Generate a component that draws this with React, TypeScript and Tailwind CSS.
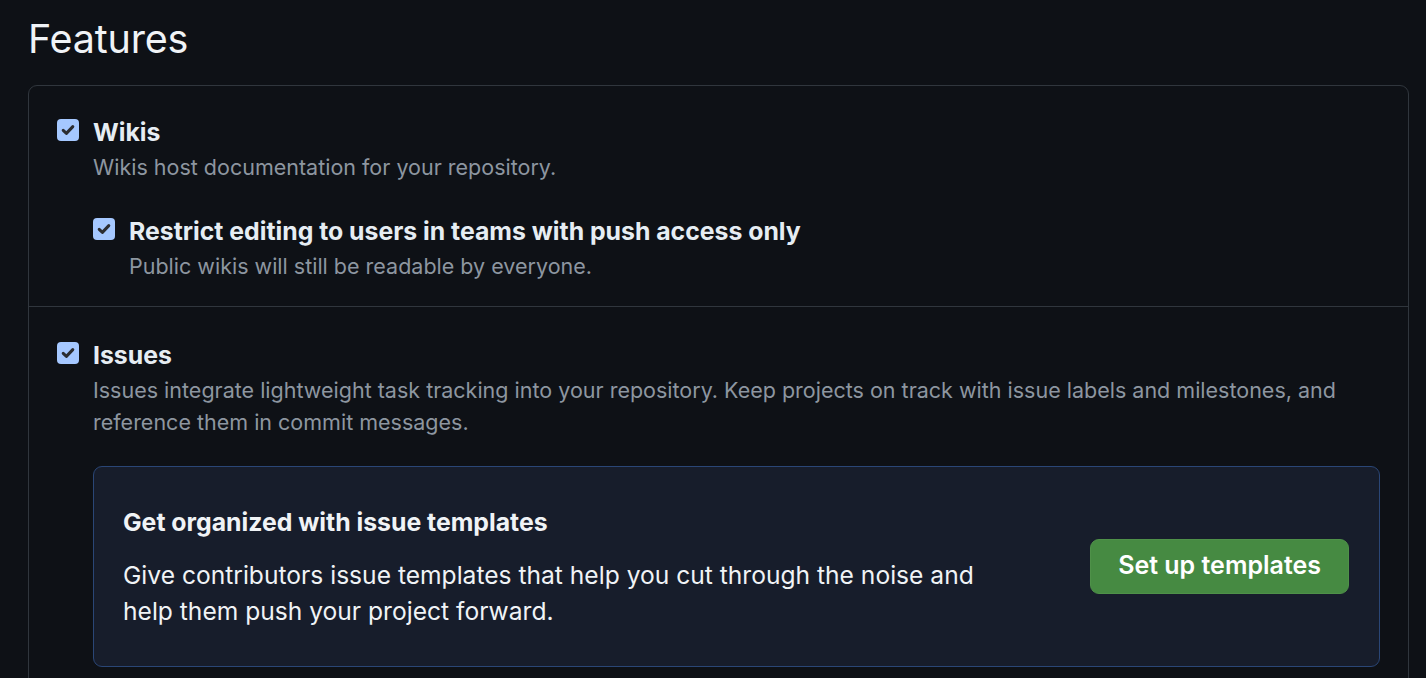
import React from "react";

function Check({ className = "" }: { className?: string }) {
  return (
    <span
      className={
        "flex h-[22px] w-[22px] shrink-0 items-center justify-center rounded-[4px] bg-[#a5c8ff] " +
        className
      }
    >
      <svg width="16" height="16" viewBox="0 0 16 16" fill="none">
        <path
          d="M3.2 8.4 L6.4 11.4 L12.8 4.6"
          stroke="#2b2d31"
          strokeWidth="3"
          strokeLinecap="round"
          strokeLinejoin="round"
        />
      </svg>
    </span>
  );
}

export default function App() {
  return (
    <div
      className="min-h-[678px] w-full overflow-hidden bg-[#0e1116] text-[#e6edf3]"
      style={{ fontFamily: "Inter, 'Noto Sans', sans-serif" }}
    >
      <div className="pl-[28px] pr-[17px]">
        <h2 className="pt-[14px] text-[39.5px] leading-[50px] font-normal tracking-[-0.2px] text-[#f0f3f6]">
          Features
        </h2>
        <div className="mt-[21px] rounded-[9px] border border-[#30363d] pb-[80px]">
          {/* Wikis */}
          <div className="border-b border-[#30363d] px-[28px] pt-[31px] pb-[24px]">
            <div className="flex gap-[14px]">
              <Check className="mt-[2px]" />
              <div>
                <div className="text-[24.8px] leading-[30px] font-bold">Wikis</div>
                <div className="mt-[4px] text-[21.5px] leading-[32px] text-[#8d96a0]">
                  Wikis host documentation for your repository.
                </div>
                <div className="mt-[33px] flex gap-[14px]">
                  <Check className="mt-[2px]" />
                  <div>
                    <div className="text-[24.8px] leading-[30px] font-bold">
                      Restrict editing to users in teams with push access only
                    </div>
                    <div className="mt-[4px] text-[21.5px] leading-[32px] text-[#8d96a0]">
                      Public wikis will still be readable by everyone.
                    </div>
                  </div>
                </div>
              </div>
            </div>
          </div>
          {/* Issues */}
          <div className="px-[28px] pt-[33px]">
            <div className="flex gap-[14px]">
              <Check className="mt-[2px]" />
              <div className="flex-1">
                <div className="text-[24.8px] leading-[30px] font-bold">Issues</div>
                <div className="mt-[4px] text-[21.5px] leading-[32px] text-[#8d96a0]">
                  Issues integrate lightweight task tracking into your repository. Keep projects on track with issue labels and milestones, and
                  <br />
                  reference them in commit messages.
                </div>
                <div className="mt-[28px] flex items-center justify-between rounded-[9px] border border-[#2a4676] bg-[#171d2b] pt-[40px] pb-[37px] pl-[29px] pr-[30px]">
                  <div>
                    <div className="text-[24.8px] leading-[30px] font-bold text-[#f0f3f6]">
                      Get organized with issue templates
                    </div>
                    <div className="mt-[20px] text-[24.6px] leading-[36px] text-[#f0f3f6]">
                      Give contributors issue templates that help you cut through the noise and
                      <br />
                      help them push your project forward.
                    </div>
                  </div>
                  <button className="-mt-[4px] h-[55px] rounded-[9px] border border-[#4f9149] bg-[#468a42] px-[27px] text-[25px] font-semibold text-white">
                    Set up templates
                  </button>
                </div>
              </div>
            </div>
          </div>
        </div>
      </div>
    </div>
  );
}
